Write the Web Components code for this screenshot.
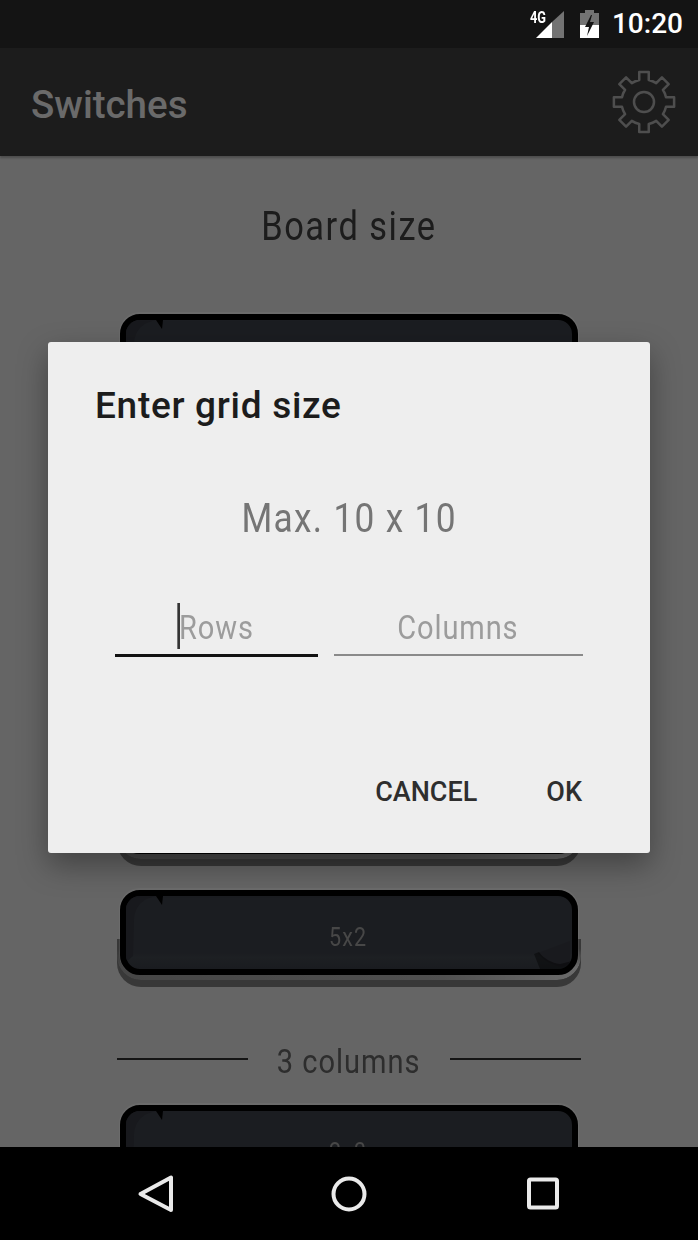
<!DOCTYPE html>
<html>
<head>
<meta charset="utf-8">
<title>Switches</title>
<style>
  html, body { margin: 0; height: 100%; }
  body { width: 698px; height: 1240px; overflow: hidden; font-family: Roboto, "Noto Sans", sans-serif; background: #000; }
</style>
</head>
<body>
<phone-screen>
  <status-bar slot="status" time="10:20"></status-bar>
  <app-bar slot="bar">Switches</app-bar>
  <board-title slot="content">Board size</board-title>
  <board-button slot="content"></board-button>
  <section-heading slot="content" style="margin-top:-2px"></section-heading>
  <board-button slot="content"></board-button>
  <board-button slot="content"></board-button>
  <board-button slot="content"></board-button>
  <board-button slot="content">5x2</board-button>
  <section-heading slot="content">3 columns</section-heading>
  <board-button slot="content">2x3</board-button>
  <grid-dialog slot="dialog"></grid-dialog>
  <nav-bar slot="nav"></nav-bar>
</phone-screen>

<script>
class PhoneScreen extends HTMLElement {
  constructor() {
    super()
    this.attachShadow({ mode: 'open' }).innerHTML = `
      <style>
        :host { display: flex; flex-direction: column; width: 698px; height: 1240px; }
        .surface { position: relative; flex: 1; min-height: 0; display: flex; flex-direction: column; overflow: hidden; background: #cbcbcb; }
        .scroll { flex: 1; min-height: 0; overflow: hidden; display: flex; flex-direction: column; gap: 24px; }
        .scrim { position: absolute; inset: 0; background: rgba(0, 0, 0, 0.5); display: flex; align-items: center; justify-content: center; }
      </style>
      <slot name="status"></slot>
      <div class="surface">
        <slot name="bar"></slot>
        <div class="scroll"><slot name="content"></slot></div>
        <div class="scrim"><slot name="dialog"></slot></div>
      </div>
      <slot name="nav"></slot>
    `
  }
}

class StatusBar extends HTMLElement {
  constructor() {
    super()
    this.attachShadow({ mode: 'open' }).innerHTML = `
      <style>
        :host { display: flex; align-items: center; justify-content: flex-end; flex: none; height: 48px; background: #141414; color: #fff; padding-right: 15px; box-sizing: border-box; }
        .signal { position: relative; align-self: flex-start; width: 36px; height: 38px; margin-right: 16px; }
        .signal svg { display: block; position: absolute; right: 0; bottom: 0; }
        .net { position: absolute; left: 2px; top: 9px; font: 700 16px/18px Roboto, sans-serif; transform: scaleX(.8); transform-origin: left; }
        .battery { display: block; margin-right: 13px; }
        .time { font: 500 28px/48px Roboto, sans-serif; }
      </style>
      <div class="signal">
        <span class="net">4G</span>
        <svg width="28" height="27" viewBox="0 0 28 27">
          <path d="M16 27V11L28 0V27Z" fill="#737373"/>
          <path d="M0 27L16 11V27Z" fill="#fff"/>
        </svg>
      </div>
      <svg class="battery" width="19" height="28" viewBox="0 0 19 28">
        <path d="M5 0H14V3H19V28H0V3H5Z" fill="#737373"/>
        <path d="M0 15H19V28H0Z" fill="#fff"/>
        <path d="M11 5L5 17H9L7 26L14 12H10L12 5Z" fill="#141414"/>
      </svg>
      <span class="time"></span>
    `
    this.shadowRoot.querySelector('.time').textContent = this.getAttribute('time') || ''
  }
}

function gearPath(cx, cy, outer, inner, teeth) {
  const pt = (r, a) => `${(cx + r * Math.sin(a)).toFixed(2)} ${(cy - r * Math.cos(a)).toFixed(2)}`
  const step = Math.PI * 2 / teeth
  let d = ''
  for (let i = 0; i < teeth; i++) {
    const a = i * step
    const w = step * 0.2
    d += `${i ? 'L' : 'M'}${pt(inner, a - step * 0.27)} L${pt(outer, a - w)} L${pt(outer, a + w)} L${pt(inner, a + step * 0.27)} `
    d += `A${inner} ${inner} 0 0 1 ${pt(inner, a + step * 0.73)} `
  }
  return d + 'Z'
}

class AppBar extends HTMLElement {
  constructor() {
    super()
    this.attachShadow({ mode: 'open' }).innerHTML = `
      <style>
        :host { display: flex; align-items: center; justify-content: space-between; flex: none; height: 108px; padding: 0 22px 0 31px; box-sizing: border-box; background: #393939; color: #d4d4d4; font: 500 38.5px Roboto, sans-serif; box-shadow: 0 2px 2px rgba(0,0,0,.25); position: relative; }
        span { margin-top: 5px; }
        svg { display: block; }
      </style>
      <span><slot></slot></span>
      <svg width="64" height="64" viewBox="0 0 64 64" fill="none" stroke="#9c9c9c" stroke-width="2.5" stroke-linejoin="round">
        <path d="${gearPath(32, 32, 30.5, 22.5, 8)}"/>
        <circle cx="32" cy="32" r="10"/>
      </svg>
    `
  }
}

class BoardTitle extends HTMLElement {
  constructor() {
    super()
    this.attachShadow({ mode: 'open' }).innerHTML = `
      <style>
        :host { display: flex; justify-content: center; align-items: center; flex: none; height: 46px; margin-top: 47px; margin-bottom: 41px; color: #383838; font: 400 40px Roboto, sans-serif; letter-spacing: 1.75px; }
        span { display: inline-block; transform: scaleX(.86); }
      </style>
      <span><slot></slot></span>
    `
  }
}

class SectionHeading extends HTMLElement {
  constructor() {
    super()
    this.attachShadow({ mode: 'open' }).innerHTML = `
      <style>
        :host { display: flex; align-items: center; flex: none; box-sizing: border-box; height: 70px; padding: 30px 117px 0; color: #5a5a5a; font: 400 33px Roboto, sans-serif; letter-spacing: 1.1px; }
        i { flex: none; width: 131px; height: 2px; background: #2a2a2a; margin-top: -4px; }
        span { flex: 1; text-align: center; white-space: nowrap; }
        b { display: inline-block; font-weight: 400; transform: scaleX(.88); }
      </style>
      <i></i><span><b><slot></slot></b></span><i></i>
    `
  }
}

class BoardButton extends HTMLElement {
  constructor() {
    super()
    this.attachShadow({ mode: 'open' }).innerHTML = `
      <style>
        :host { display: block; flex: none; position: relative; box-sizing: border-box; width: 464px; height: 97px; margin: 0 auto; padding: 0 3px; color: #8e8e8e; font: 400 25px Roboto, sans-serif; letter-spacing: 1.2px; }
        .base, .rim { position: absolute; left: 0; right: 0; border-radius: 0 0 24px 24px; }
        .base { bottom: 0; height: 48px; background: #707070; }
        .rim { bottom: 7px; height: 42px; background: linear-gradient(to right, #8c8c8c, #a0a0a0 70%, #d8d8d8); -webkit-mask-image: linear-gradient(to bottom, transparent 25%, #000 70%); mask-image: linear-gradient(to bottom, transparent 25%, #000 70%); }
        .face { position: relative; display: flex; align-items: center; justify-content: center; box-sizing: border-box; height: 85px; border: 6px solid #000; border-radius: 20px; background: linear-gradient(to bottom, #373a42 78%, #3b4046 84%, #343840); box-shadow: 0 -1px 0 1px rgba(255,255,255,.22); overflow: hidden; }
        .face span { display: inline-block; transform: scaleX(.86); margin-top: 10px; margin-left: -2px; }
        svg { position: absolute; }
        .tl { left: 0; top: 0; }
        .br { right: 0; bottom: 0; }
      </style>
      <div class="base"></div>
      <div class="rim"></div>
      <div class="face">
        <svg class="tl" width="44" height="66" viewBox="0 0 44 66"><path d="M0 0H32C22 1 9 6 8 24L7 60L0 66Z" fill="#30323a"/><path d="M30 0H37L36 9Z" fill="#000"/></svg>
        <svg class="br" width="40" height="30" viewBox="0 0 40 30"><path d="M6 14L38 2V24L30 28C20 26 12 22 6 14Z" fill="#33353d"/><path d="M2 15L7 13C12 20 20 24 28 25L40 22V30H8Z" fill="#000" opacity=".4"/></svg>
        <span><slot></slot></span>
      </div>
    `
  }
}

class TextField extends HTMLElement {
  constructor() {
    super()
    const focused = this.hasAttribute('focused')
    this.attachShadow({ mode: 'open' }).innerHTML = `
      <style>
        :host { display: flex; justify-content: center; align-items: center; position: relative; box-sizing: border-box; height: ${focused ? 56 : 55}px; color: #9c9c9c; font: 400 33px Roboto, sans-serif; letter-spacing: 1px; border-bottom: ${focused ? '3px solid #111' : '2px solid #8a8a8a'}; }
        span { display: inline-block; position: relative; transform: scaleX(.88); }
        .caret { position: absolute; left: -2px; top: -5px; width: 3px; height: 46px; background: #333; }
      </style>
      <span>${focused ? '<div class="caret"></div>' : ''}<slot></slot></span>
    `
  }
}

class GridDialog extends HTMLElement {
  constructor() {
    super()
    this.attachShadow({ mode: 'open' }).innerHTML = `
      <style>
        :host { display: block; box-sizing: border-box; width: 602px; height: 511px; padding: 43px 67px 41px; background: #eeeeee; border-radius: 3px; box-shadow: 0 12px 30px rgba(0,0,0,.35); font-family: Roboto, sans-serif; }
        h2 { margin: 0 0 0 -20px; font: 500 37px/42px Roboto, sans-serif; letter-spacing: .7px; color: #1c1c1c; white-space: nowrap; }
        .hint { margin-top: 66px; height: 50px; line-height: 50px; text-align: center; color: #757575; font-size: 41px; letter-spacing: 1.5px; }
        .hint span { display: inline-block; transform: scaleX(.86); }
        .fields { display: flex; align-items: flex-start; gap: 16px; margin-top: 58px; }
        text-field:first-child { flex: 203 0 0; }
        text-field:last-child { flex: 250 0 0; }
        .actions { display: flex; justify-content: flex-end; gap: 69px; padding-right: 1px; margin-top: 115px; font: 500 27px/40px Roboto, sans-serif; color: #2e2e2e; }
      </style>
      <h2>Enter grid size</h2>
      <div class="hint"><span>Max. 10 x 10</span></div>
      <div class="fields">
        <text-field focused>Rows</text-field>
        <text-field>Columns</text-field>
      </div>
      <div class="actions"><span>CANCEL</span><span>OK</span></div>
    `
  }
}

class NavBar extends HTMLElement {
  constructor() {
    super()
    this.attachShadow({ mode: 'open' }).innerHTML = `
      <style>
        :host { display: flex; justify-content: center; align-items: center; flex: none; height: 93px; background: #000; }
        .btn { width: 194px; display: flex; justify-content: center; }
        svg { display: block; fill: none; stroke: #eaeaea; stroke-width: 4; stroke-linejoin: round; }
      </style>
      <div class="btn"><svg width="40" height="40" viewBox="0 0 40 40"><path d="M5.5 20L36 3.5V36Z"/></svg></div>
      <div class="btn"><svg width="40" height="40" viewBox="0 0 40 40"><circle cx="20" cy="20" r="15.5"/></svg></div>
      <div class="btn"><svg width="40" height="40" viewBox="0 0 40 40"><rect x="6" y="5.5" width="28" height="28" rx="1.5"/></svg></div>
    `
  }
}

customElements.define('text-field', TextField)
customElements.define('phone-screen', PhoneScreen)
customElements.define('status-bar', StatusBar)
customElements.define('app-bar', AppBar)
customElements.define('board-title', BoardTitle)
customElements.define('section-heading', SectionHeading)
customElements.define('board-button', BoardButton)
customElements.define('grid-dialog', GridDialog)
customElements.define('nav-bar', NavBar)
</script>
</body>
</html>
